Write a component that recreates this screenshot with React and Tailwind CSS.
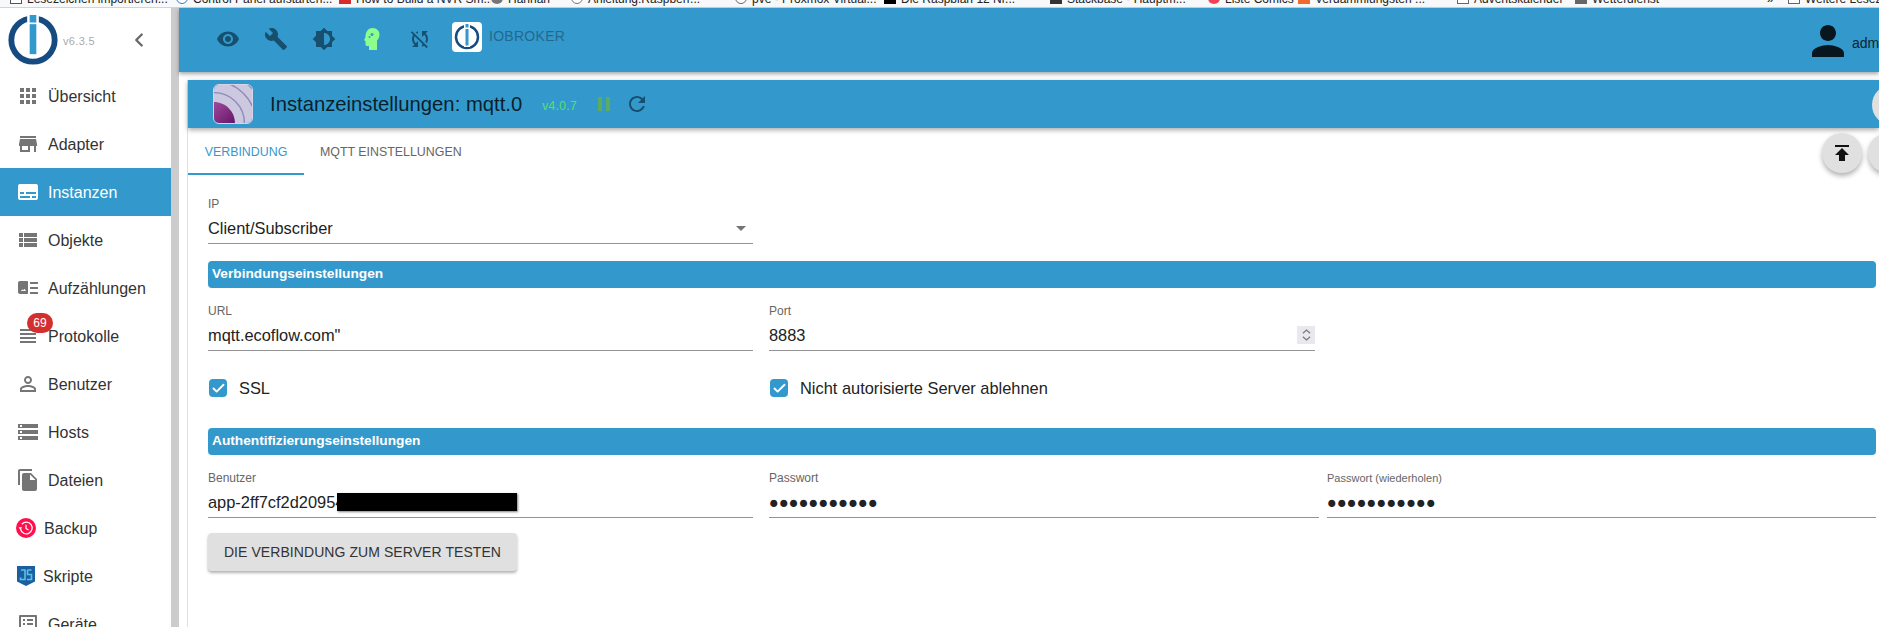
import React from 'react';
import { ChevronLeft, Check } from 'lucide-react';

const font = "font-['Liberation_Sans',Arial,sans-serif]";

// slot widths follow the spacing of the browser's bookmark bar
const bookmarks = [
    { label: 'Lesezeichen importieren...', w: 'w-[166px]', c: 'border border-[#555] bg-white' },
    { label: 'Control Panel aufstarten...', w: 'w-[163px]', c: 'border border-[#2f7fd0] bg-white rounded-full' },
    { label: 'How to Build a NVR Sm...', w: 'w-[152px]', c: 'bg-[#d92b2b]' },
    { label: 'Hannah', w: 'w-[80px]', c: 'bg-[#777] rounded-full' },
    { label: 'Anleitung:Raspberr...', w: 'w-[164px]', c: 'border border-[#777] bg-white rounded-full' },
    { label: 'pve - Proxmox Virtual...', w: 'w-[149px]', c: 'border border-[#666] bg-white rounded-full' },
    { label: 'Die Raspbian 12 Nr...', w: 'w-[166px]', c: 'bg-black' },
    { label: 'Stackbase - Hauptm...', w: 'w-[158px]', c: 'bg-[#333]' },
    { label: 'Liste Comics', w: 'w-[90px]', c: 'bg-[#f0405a] rounded-full' },
    { label: 'Verdammlungsten ...', w: 'w-[159px]', c: 'bg-[#f26a2e]' },
    { label: 'Adventskalender', w: 'w-[118px]', c: 'border border-[#666] bg-white' },
    { label: 'Wetterdienst', w: 'w-[192px]', c: 'bg-[#666]' },
];

const Mi = ({ d, className = '' }) => (
    <svg viewBox="0 0 24 24" width="24" height="24" fill="currentColor" className={className}>
        <path d={d} />
    </svg>
);

const icons = {
    apps: 'M4 8h4V4H4v4zm6 12h4v-4h-4v4zm-6 0h4v-4H4v4zm0-6h4v-4H4v4zm6 0h4v-4h-4v4zm6-10v4h4V4h-4zm-6 4h4V4h-4v4zm6 6h4v-4h-4v4zm0 6h4v-4h-4v4z',
    store: 'M20 4H4v2h16V4zm1 10v-2l-1-5H4l-1 5v2h1v6h10v-6h4v6h2v-6h1zm-9 4H6v-4h6v4z',
    subtitles: 'M20 4H4c-1.1 0-2 .9-2 2v12c0 1.1.9 2 2 2h16c1.1 0 2-.9 2-2V6c0-1.1-.9-2-2-2zM4 12h4v2H4v-2zm10 6H4v-2h10v2zm6 0h-4v-2h4v2zm0-4H10v-2h10v2z',
    objects: 'M3 14h4v-4H3v4zm0 5h4v-4H3v4zM3 9h4V5H3v4zm5 5h13v-4H8v4zm0 5h13v-4H8v4zM8 5v4h13V5H8z',
    enums: 'M2 7c0-1.100.9-2 2-2h7c.6 0 1 .4 1 1v11c0 .6-.4 1-1 1H4c-1.100 0-2-.9-2-2V7zm3 8h5l-1.600-2.200-1.300 1.600-.9-1.100L5 15zm9-9h8v2h-8V6zm0 5h8v2h-8v-2zm0 5h8v2h-8v-2z',
    lines: 'M4 5h16v2H4V5zm0 4h16v2H4V9zm0 4h16v2H4v-2zm0 4h16v2H4v-2z',
    person: 'M12 5.900a2.100 2.100 0 1 1 0 4.200 2.100 2.100 0 0 1 0-4.200m0 9c2.970 0 6.100 1.460 6.100 2.100v1.100H5.900V17c0-.64 3.130-2.100 6.100-2.100M12 4C9.790 4 8 5.790 8 8s1.790 4 4 4 4-1.790 4-4-1.790-4-4-4zm0 9c-2.670 0-8 1.340-8 4v3h16v-3c0-2.660-5.330-4-8-4z',
    storage: 'M2 20h20v-4H2v4zm2-3h2v2H4v-2zM2 4v4h20V4H2zm4 3H4V5h2v2zm-4 7h20v-4H2v4zm2-3h2v2H4v-2z',
    files: 'M16 1H4c-1.100 0-2 .9-2 2v14h2V3h12V1zm-1 4 6 6v10c0 1.100-.9 2-2 2H7.990C6.890 23 6 22.100 6 21l.01-14c0-1.100.89-2 1.990-2h7zm-1 7h5.500L14 6.500V12z',
    devices: 'M19 5v14H5V5h14m1.100-2H3.900c-.5 0-.9.4-.9.9v16.200c0 .4.4.9.9.9h16.200c.4 0 .9-.5.9-.9V3.900c0-.5-.5-.9-.9-.9zM11 7h6v2h-6V7zm0 4h6v2h-6v-2zm0 4h6v2h-6v-2zM7 7h2v2H7V7zm0 4h2v2H7v-2zm0 4h2v2H7v-2z',
    eye: 'M12 4.500C7 4.500 2.730 7.610 1 12c1.730 4.390 6 7.500 11 7.500s9.270-3.110 11-7.500c-1.730-4.390-6-7.500-11-7.500zM12 17c-2.760 0-5-2.240-5-5s2.240-5 5-5 5 2.240 5 5-2.240 5-5 5zm0-8c-1.660 0-3 1.340-3 3s1.340 3 3 3 3-1.340 3-3-1.340-3-3-3z',
    wrench: 'M22.700 19l-9.100-9.100c.9-2.300.4-5-1.500-6.900-2-2-5-2.400-7.400-1.300L9 6 6 9 1.600 4.700C.4 7.100.9 10.100 2.900 12.100c1.900 1.900 4.600 2.400 6.900 1.500l9.100 9.100c.4.4 1 .4 1.400 0l2.300-2.300c.5-.4.5-1.100.1-1.400z',
    brightness: 'M20 8.690V4h-4.690L12 .69 8.690 4H4v4.690L.69 12 4 15.310V20h4.690L12 23.310 15.310 20H20v-4.690L23.310 12 20 8.690zM12 18V6c3.310 0 6 2.690 6 6s-2.690 6-6 6z',
    syncOff: 'M10 6.350V4.260c-.8.21-1.550.54-2.230.96l1.460 1.460c.25-.12.5-.24.77-.33zm-7.140-.94 2.360 2.360C4.450 8.990 4 10.440 4 12c0 2.210.91 4.200 2.360 5.640L4 20h6v-6l-2.240 2.240C6.680 15.150 6 13.660 6 12c0-1 .25-1.940.68-2.770l8.080 8.080c-.25.13-.5.25-.77.34v2.090c.8-.21 1.550-.54 2.230-.96l2.360 2.360 1.270-1.270L4.140 4.140 2.860 5.410zM20 4h-6v6l2.240-2.240C17.320 8.850 18 10.340 18 12c0 1-.25 1.940-.68 2.770l1.460 1.460C19.550 15.010 20 13.560 20 12c0-2.210-.91-4.200-2.360-5.640L20 4z',
    refresh: 'M17.650 6.350C16.200 4.900 14.210 4 12 4c-4.420 0-7.990 3.580-7.990 8s3.570 8 7.990 8c3.730 0 6.840-2.550 7.730-6h-2.080c-.82 2.330-3.040 4-5.650 4-3.310 0-6-2.690-6-6s2.690-6 6-6c1.660 0 3.140.69 4.220 1.780L13 11h7V4l-2.350 2.350z',
    user: 'M12 12c2.210 0 4-1.790 4-4s-1.790-4-4-4-4 1.790-4 4 1.790 4 4 4zm0 2c-2.670 0-8 1.340-8 4v2h16v-2c0-2.660-5.330-4-8-4z',
    publish: 'M5 4v2h14V4H5zm0 10h4v6h6v-6h4l-7-7-7 7z',
};

const menu = [
    { label: 'Übersicht', icon: icons.apps },
    { label: 'Adapter', icon: icons.store },
    { label: 'Instanzen', icon: icons.subtitles, active: true },
    { label: 'Objekte', icon: icons.objects },
    { label: 'Aufzählungen', icon: icons.enums },
    { label: 'Protokolle', icon: icons.lines, badge: '69' },
    { label: 'Benutzer', icon: icons.person },
    { label: 'Hosts', icon: icons.storage },
    { label: 'Dateien', icon: icons.files },
    { label: 'Backup', custom: 'backup' },
    { label: 'Skripte', custom: 'js' },
    { label: 'Geräte', icon: icons.devices },
];

const IobLogo = ({ size, white }) => (
    <svg viewBox="0 0 60 60" width={size} height={size} className={white ? 'bg-white rounded-sm' : ''}>
        <circle cx="30" cy="30" r={white ? 22 : 26} fill="none" stroke="#164b82" strokeWidth={white ? 5 : 7} />
        <rect x={white ? 24 : 23} y="0" width={white ? 12 : 14} height={50} fill="#fff" />
        <rect x={white ? 27 : 26} y={white ? 4 : 0} width={white ? 6 : 8} height={white ? 7 : 9} fill="#3399cc" />
        <rect x={white ? 27 : 26} y={white ? 14 : 11} width={white ? 6 : 8} height={white ? 33 : 36} fill="#3399cc" />
    </svg>
);

function MenuItem({ item }) {
    return (
        <div className={`relative h-12 flex items-center shrink-0 ${item.active ? 'bg-[#3399cc] text-white' : 'text-[#333]'}`}>
            {item.custom === 'backup' && (
                <svg viewBox="0 0 24 24" width="20" height="20" className="ml-4">
                    <circle cx="12" cy="12" r="12" fill="#ff0f4b" />
                    <path d="M7 7.500a7 7 0 1 1-1.500 6" fill="none" stroke="#fff" strokeWidth="1.500" />
                    <path d="M12 8v4.500l3 2" fill="none" stroke="#fff" strokeWidth="1.500" />
                    <path d="M3 11h4.500L5.200 14z" fill="#fff" />
                </svg>
            )}
            {item.custom === 'js' && (
                <svg viewBox="0 0 18 20" width="18" height="20" className="ml-[17px]">
                    <path d="M0 0h18v15.500L9 20 0 15.500z" fill="#1a5fa0" />
                    <path d="M4 4h4v9.500H3.500v-2M10.500 4h4M10.500 4v4.500h4v5H10" fill="none" stroke="#5cc0e8" strokeWidth="1.600" />
                </svg>
            )}
            {item.icon && (
                <Mi d={item.icon} className={`ml-4 ${item.active ? 'text-white' : 'text-[#757575]'}`} />
            )}
            <span className="text-base mt-[2px] ml-2">{item.label}</span>
            {item.badge && (
                <span className="absolute left-[27px] top-px w-[26px] h-5 rounded-full bg-[#d32f2f] text-white text-xs flex items-center justify-center">
                    {item.badge}
                </span>
            )}
        </div>
    );
}

const Field = ({ label, value, className = '', labelClass = 'text-xs', children }) => (
    <div className={`relative ${className}`}>
        <div className={`${labelClass} text-[#666] h-[17px] leading-[17px]`}>{label}</div>
        <div className="h-[30px] flex items-center text-[16.400px] text-[#222] border-b border-[#949494] box-content">
            {value}
            {children}
        </div>
    </div>
);

const CheckBox = ({ label, className = '' }) => (
    <div className={`flex items-center ${className}`}>
        <span className="w-[18px] h-[18px] ml-px rounded-sm bg-[#3399cc] flex items-center justify-center">
            <Check size={15} strokeWidth={3} className="text-white" />
        </span>
        <span className="ml-3 text-[16.400px] text-[#222]">{label}</span>
    </div>
);

const SectionBar = ({ children }) => (
    <div className="h-[27px] rounded-sm bg-[#3399cc] pl-1 flex items-center text-[13.700px] font-bold text-white">
        {children}
    </div>
);

export default function App() {
    return (
        <div className={`${font} h-[627px] w-[1879px] overflow-hidden flex flex-col bg-white`}>
            {/* Browser bookmarks, cut off by the screenshot */}
            <div className="h-2 shrink-0 overflow-hidden bg-[#f8f9fa] border-b border-[#d4d4d4] flex pl-[10px] text-xs text-[#222]">
                {bookmarks.map((b) => (
                    <span key={b.label} className={`${b.w} shrink-0 flex whitespace-nowrap overflow-hidden`}>
                        <i className={`${b.c} block w-3 h-3 -mt-2 shrink-0`} />
                        <span className="ml-[5px] -mt-[9px] leading-4">{b.label}</span>
                    </span>
                ))}
                <span className="w-[21px] shrink-0 -mt-[9px] leading-4">»</span>
                <span className="shrink-0 flex whitespace-nowrap">
                    <i className="border border-[#666] bg-white block w-3 h-3 -mt-2 shrink-0" />
                    <span className="ml-[5px] -mt-[9px] leading-4">Weitere Lesezeichen</span>
                </span>
            </div>

            <div className="flex-1 flex min-h-0">
                {/* Sidebar */}
                <aside className="w-[171px] shrink-0 flex flex-col overflow-hidden">
                    <div className="h-[64px] shrink-0 flex items-center pl-2">
                        <IobLogo size={50} />
                        <span className="ml-[5px] mt-[2px] text-[11px] tracking-[0.03em] text-[#aaa]">v6.3.5</span>
                        <ChevronLeft size={22} strokeWidth={2.500} className="ml-[33px] text-[#666]" />
                    </div>
                    {menu.map((m) => <MenuItem key={m.label} item={m} />)}
                </aside>
                <div className="w-2 shrink-0 bg-[#ccc]" />

                {/* Main */}
                <main className="flex-1 min-w-0 flex flex-col relative">
                    <header className="h-16 shrink-0 bg-[#3399cc] shadow-[0_2px_4px_rgba(0,0,0,0.35)] flex items-center text-[#174f6f] z-10">
                        <div className="flex items-center -mt-[2px] pl-[25px]">
                            <span className="w-12 flex justify-center"><Mi d={icons.eye} /></span>
                            <span className="w-12 flex justify-center"><Mi d={icons.wrench} /></span>
                            <span className="w-12 flex justify-center"><Mi d={icons.brightness} /></span>
                            <span className="w-12 flex justify-center">
                                <svg viewBox="0 0 24 24" width="24" height="24">
                                    <path d="M12.500 1c4.500 0 7 3 7 6.500 0 2.500-1 4.500-2.500 6V23H9v-4H7c-1 0-1.500-.8-1.500-1.500V14l-1.500-.8L5.500 10C5.500 5 8 1 12.500 1z" fill="#8cff8c" />
                                    <circle cx="12" cy="7.500" r="1.500" fill="#3399cc" />
                                    <circle cx="9.500" cy="10" r="1" fill="#3399cc" />
                                </svg>
                            </span>
                            <span className="w-12 flex justify-center"><Mi d={icons.syncOff} /></span>
                        </div>
                        <div className="ml-2 -mt-[6px] flex"><IobLogo size={30} white /></div>
                        <span className="ml-[7px] -mt-[8px] text-sm tracking-[0.02em] text-[#23688f]">IOBROKER</span>
                        <div className="ml-auto flex items-center w-[75px] mt-[2px] shrink-0 overflow-hidden">
                            <Mi d={icons.user} className="w-12 h-12 shrink-0 text-[#08171f]" />
                            <span className="mt-[3px] text-sm text-[#0b2433]">admin</span>
                        </div>
                    </header>

                    <div className="flex-1 flex flex-col pl-2 pt-2 bg-white min-h-0">
                        <div className="flex-1 flex flex-col border-l border-[#e0e0e0] min-h-0">
                            <div className="h-12 shrink-0 bg-[#3399cc] shadow-[0_2px_5px_rgba(0,0,0,0.35)] flex items-center pl-[25px] z-[5]">
                                <svg viewBox="0 0 40 40" width="40" height="40" className="rounded-md border border-[#d8d4e8] shrink-0">
                                    <defs>
                                        <linearGradient id="mqttPurple" x1="0" y1="0" x2="1" y2="1">
                                            <stop offset="0" stopColor="#a04a9e" />
                                            <stop offset="1" stopColor="#661566" />
                                        </linearGradient>
                                    </defs>
                                    <rect width="40" height="40" fill="#cbc8e0" />
                                    <circle cx="0" cy="40" r="32" fill="none" stroke="#8f8ab8" strokeWidth="1.500" />
                                    <circle cx="0" cy="40" r="44" fill="none" stroke="#8f8ab8" strokeWidth="1.500" />
                                    <circle cx="0" cy="40" r="54" fill="none" stroke="#8f8ab8" strokeWidth="1.500" />
                                    <path d="M0 18c12 0 22 10 22 22H0z" fill="url(#mqttPurple)" />
                                </svg>
                                <span className="ml-[17px] text-[20.250px] text-[#0b1f2b]">Instanzeinstellungen: mqtt.0</span>
                                <span className="ml-[20px] mt-[3px] text-xs tracking-[0.03em] text-[#55e06a]">v4.0.7</span>
                                <span className="ml-[21px] flex gap-[4px]">
                                    <i className="block w-1 h-[14px] bg-[#5dab5d]" />
                                    <i className="block w-1 h-[14px] bg-[#5dab5d]" />
                                </span>
                                <Mi d={icons.refresh} className="ml-[15px] text-[#174f6f]" />
                            </div>

                            <div className="h-[47px] shrink-0 flex text-[12.400px]">
                                <div className="w-[116px] flex items-center justify-center pt-[3px] text-[#3399cc] border-b-2 border-[#3399cc]">VERBINDUNG</div>
                                <div className="ml-[16px] flex items-center pt-px text-[#666]">MQTT EINSTELLUNGEN</div>
                            </div>

                            <div className="pl-5 pr-[3px] pt-[21px]">
                                <Field label="IP" value="Client/Subscriber" className="w-[545px]">
                                    <svg viewBox="0 0 10 5" width="10" height="5" className="ml-auto mr-[7px]"><path d="M0 0h10L5 5z" fill="#757575" /></svg>
                                </Field>

                                <div className="mt-[17px]"><SectionBar>Verbindungseinstellungen</SectionBar></div>

                                <div className="mt-[15px] flex">
                                    <Field label="URL" value={'mqtt.ecoflow.com"'} className="w-[545px]" />
                                    <Field label="Port" value="8883" className="ml-4 w-[546px]">
                                        <span className="ml-auto w-[18px] h-[18px] bg-[#e8e8ee] flex flex-col items-center justify-center">
                                            <svg viewBox="0 0 10 14" width="9" height="14">
                                                <path d="M1 5l4-3.500L9 5M1 9l4 3.500L9 9" fill="none" stroke="#777" strokeWidth="1.300" />
                                            </svg>
                                        </span>
                                    </Field>
                                </div>

                                <div className="mt-[19px] h-[36px] flex">
                                    <CheckBox label="SSL" className="w-[561px]" />
                                    <CheckBox label="Nicht autorisierte Server ablehnen" />
                                </div>

                                <div className="mt-[22px]"><SectionBar>Authentifizierungseinstellungen</SectionBar></div>

                                <div className="mt-[15px] flex">
                                    <Field label="Benutzer" value="app-2ff7cf2d20954" className="w-[545px]">
                                        <span className="absolute left-[129px] top-[23px] w-[180px] h-[18px] bg-black shadow-[1px_1px_2px_rgba(0,0,0,0.5)]" />
                                    </Field>
                                    <Field label="Passwort" value="●●●●●●●●●●●" className="ml-4 w-[550px]" />
                                    <Field label="Passwort (wiederholen)" labelClass="text-[11px]" value="●●●●●●●●●●●" className="ml-2 flex-1" />
                                </div>

                                <button className="mt-[15px] w-[309px] h-[38px] rounded bg-[#e0e0e0] text-sm text-[#333] tracking-[0.005em] shadow-[0_2px_3px_rgba(0,0,0,0.3)]">
                                    DIE VERBINDUNG ZUM SERVER TESTEN
                                </button>
                            </div>
                        </div>
                    </div>

                    {/* Floating round buttons, overlapping the page edge */}
                    <span className="absolute left-[1643px] top-[125px] w-10 h-10 rounded-full bg-[#e0e0e0] shadow-[0_3px_5px_rgba(0,0,0,0.3)] flex items-center justify-center z-20">
                        <Mi d={icons.publish} className="text-[#111]" />
                    </span>
                    <span className="absolute left-[1689px] top-[125px] w-10 h-10 rounded-full bg-[#e0e0e0] shadow-[0_3px_5px_rgba(0,0,0,0.3)] z-20" />
                    <span className="absolute left-[1693px] top-[77px] w-10 h-10 rounded-full bg-[#e0e0e0] z-20" />
                </main>
            </div>
        </div>
    );
}
